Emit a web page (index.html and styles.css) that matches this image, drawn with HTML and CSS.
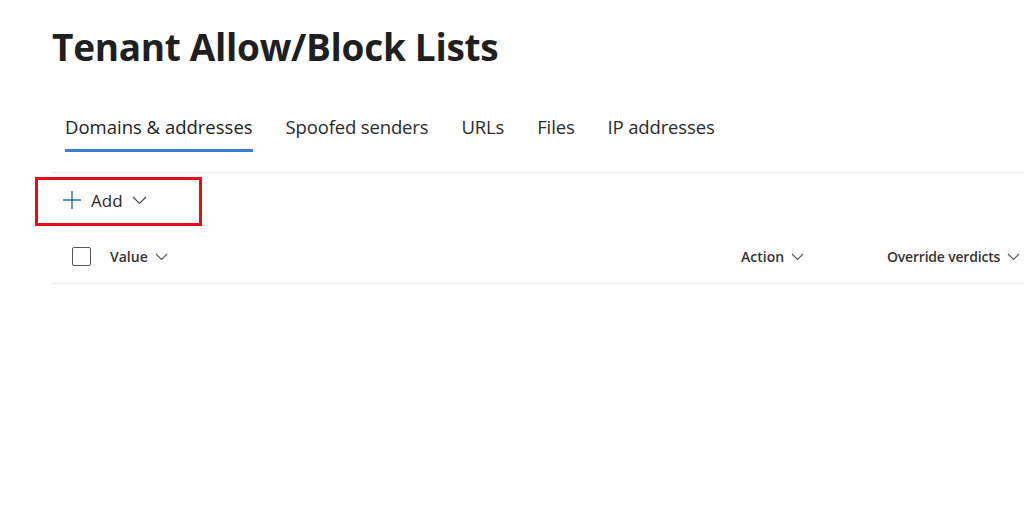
FILE: index.html
```html
<!DOCTYPE html>
<html>
<head>
<meta charset="utf-8">
<link rel="stylesheet" href="styles.css">
</head>
<body>
<div class="page">
  <h1 class="title">Tenant Allow/Block Lists</h1>
  <nav class="tabs">
    <span class="tab active">Domains &amp; addresses</span>
    <span class="tab">Spoofed senders</span>
    <span class="tab">URLs</span>
    <span class="tab">Files</span>
    <span class="tab">IP addresses</span>
  </nav>
  <div class="toolbar">
    <div class="add-btn">
      <svg class="plus" width="20" height="20" viewBox="0 0 20 20"><path d="M10 1v18M1 10h18" stroke="#2a6cb8" stroke-width="1.4" fill="none"/></svg>
      <span class="add-label">Add</span>
      <svg class="chev" width="15" height="9" viewBox="0 0 15 9"><path d="M1 1l6.5 6.5L14 1" stroke="#444" stroke-width="1.2" fill="none"/></svg>
    </div>
  </div>
  <div class="header-row">
    <div class="cell check-cell"><span class="checkbox"></span></div>
    <div class="cell value-cell">Value <svg class="hchev" width="13" height="8" viewBox="0 0 13 8"><path d="M1 1l5.5 5.5L12 1" stroke="#555" stroke-width="1.1" fill="none"/></svg></div>
    <div class="cell action-cell">Action <svg class="hchev" width="13" height="8" viewBox="0 0 13 8"><path d="M1 1l5.5 5.5L12 1" stroke="#555" stroke-width="1.1" fill="none"/></svg></div>
    <div class="cell override-cell">Override verdicts <svg class="hchev" width="13" height="8" viewBox="0 0 13 8"><path d="M1 1l5.5 5.5L12 1" stroke="#555" stroke-width="1.1" fill="none"/></svg></div>
  </div>
</div>
</body>
</html>
```
FILE: styles.css
```css
html, body {
  margin: 0;
  padding: 0;
  background: #fff;
  font-family: "Open Sans", "Noto Sans", sans-serif;
  color: #242424;
  overflow: hidden;
}
.page {
  padding-left: 52px;
  height: 517px;
}
.title {
  margin: 0;
  padding-top: 22px;
  font-size: 37px;
  font-weight: 700;
  line-height: 50px;
  color: #1f1f1f;
  letter-spacing: -0.3px;
}
.tabs {
  display: flex;
  gap: 33px;
  padding-left: 13px;
  margin-top: 43px;
  height: 58px;
  box-sizing: border-box;
  border-bottom: 1px solid #ebebeb;
}
.tab {
  font-size: 18.5px;
  line-height: 24px;
  color: #2b2b2b;
  height: 37px;
  box-sizing: border-box;
}
.tab + .tab { letter-spacing: -0.15px; }
.tab.active {
  border-bottom: 3px solid #3a7fd0;
  color: #222;
}
.toolbar {
  height: 52px;
  padding-top: 4px;
  box-sizing: border-box;
  display: flex;
  align-items: flex-start;
}
.add-btn {
  display: flex;
  align-items: center;
  margin-left: -17px;
  width: 167px;
  height: 49px;
  box-sizing: border-box;
  border: 3px solid #e50d14;
  padding-left: 24px;
  padding-bottom: 3px;
}
.add-label {
  font-size: 17px;
  margin-left: 9px;
  margin-right: 9px;
  color: #2a2a2a;
}
.chev { margin-top: 1px; }
.header-row {
  display: flex;
  align-items: center;
  height: 59px;
  padding-top: 5px;
  box-sizing: border-box;
  border-bottom: 1px solid #ebebeb;
}
.cell {
  display: flex;
  align-items: center;
  font-size: 14px;
  font-weight: 600;
  color: #333;
}
.override-cell { letter-spacing: -0.2px; }
.hchev { margin-left: 7px; }
.check-cell { width: 58px; padding-left: 20px; box-sizing: border-box; }
.checkbox {
  width: 19px;
  height: 19px;
  box-sizing: border-box;
  border: 1.5px solid #555;
  border-radius: 2px;
}
.value-cell { width: 631px; }
.action-cell { width: 146px; }
```
